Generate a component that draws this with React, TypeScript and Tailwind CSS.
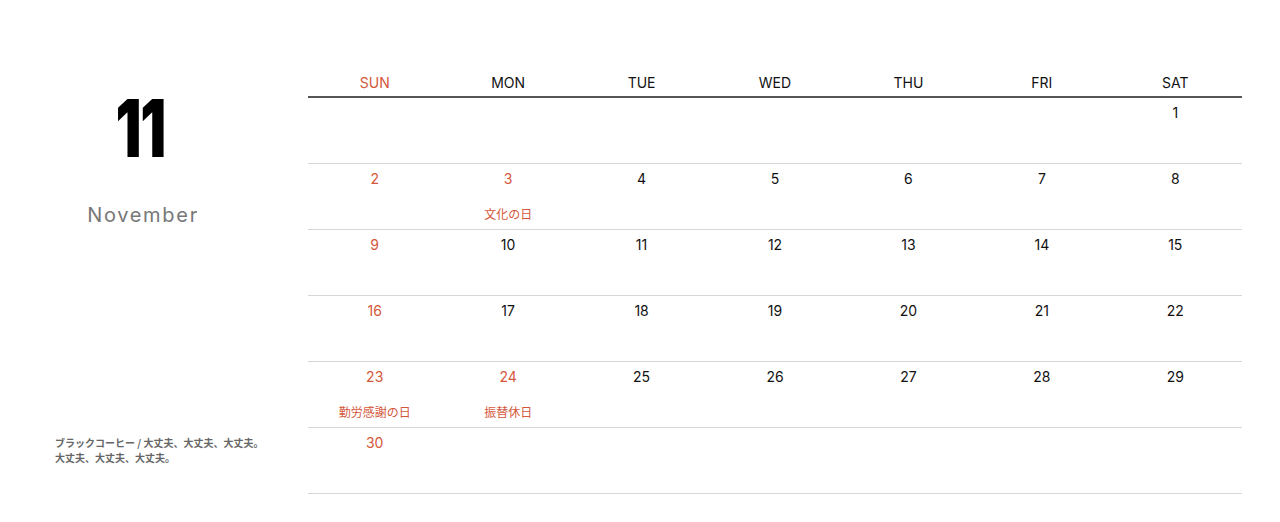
import React from "react";

const days = ["SUN", "MON", "TUE", "WED", "THU", "FRI", "SAT"];
type Cell = { d?: number; h?: string };
const weeks: Cell[][] = [
  [{}, {}, {}, {}, {}, {}, { d: 1 }],
  [{ d: 2 }, { d: 3, h: "文化の日" }, { d: 4 }, { d: 5 }, { d: 6 }, { d: 7 }, { d: 8 }],
  [{ d: 9 }, { d: 10 }, { d: 11 }, { d: 12 }, { d: 13 }, { d: 14 }, { d: 15 }],
  [{ d: 16 }, { d: 17 }, { d: 18 }, { d: 19 }, { d: 20 }, { d: 21 }, { d: 22 }],
  [{ d: 23, h: "勤労感謝の日" }, { d: 24, h: "振替休日" }, { d: 25 }, { d: 26 }, { d: 27 }, { d: 28 }, { d: 29 }],
  [{ d: 30 }, {}, {}, {}, {}, {}, {}],
];
const red = "text-[#d4573b]";

export default function App() {
  return (
    <div
      className="w-[1280px] h-[522px] bg-white flex"
      style={{ fontFamily: "Inter, 'Noto Sans CJK JP', sans-serif" }}
    >
      <div className="w-[308px] shrink-0 flex flex-col">
        <div className="w-[284px] flex flex-col items-center pt-[88px]">
          <div
            className="text-[80px] leading-[80px] font-black text-black tracking-[-2px] scale-x-[0.72] -translate-x-[2px]"
            style={{ fontFamily: "Inter, sans-serif" }}
          >
            11
          </div>
          <div className="mt-[35px] text-[20px] leading-[24px] text-[#777] tracking-[1.7px] translate-x-[1px]">
            November
          </div>
        </div>
        <div
          className="mt-auto mb-[57px] ml-[55px] text-[10px] leading-[15px] font-bold text-[#666]"
          style={{ fontFamily: "'Noto Sans CJK JP', sans-serif" }}
        >
          <div>ブラックコーヒー / 大丈夫、大丈夫、大丈夫。</div>
          <div>大丈夫、大丈夫、大丈夫。</div>
        </div>
      </div>
      <div className="w-[934px] pt-[68px]">
        <div className="grid grid-cols-7 h-[30px] border-b-2 border-[#555]">
          {days.map((d, i) => (
            <div
              key={d}
              className={`text-center text-[14px] leading-[30px] ${i === 0 ? red : "text-[#111]"}`}
            >
              {d}
            </div>
          ))}
        </div>
        {weeks.map((w, wi) => (
          <div key={wi} className="grid grid-cols-7 h-[66px] border-b border-[#d6d6d6]">
            {w.map((c, ci) => {
              const isRed = ci === 0 || !!c.h;
              return (
                <div key={ci} className="flex flex-col items-center pt-[5px]">
                  <div className={`text-[14px] leading-[20px] ${isRed ? red : "text-[#111]"}`}>
                    {c.d ?? ""}
                  </div>
                  {c.h && (
                    <div
                      className={`mt-[19px] text-[12px] leading-[12px] ${red}`}
                      style={{ fontFamily: "'Noto Sans CJK JP', sans-serif" }}
                    >
                      {c.h}
                    </div>
                  )}
                </div>
              );
            })}
          </div>
        ))}
      </div>
    </div>
  );
}
